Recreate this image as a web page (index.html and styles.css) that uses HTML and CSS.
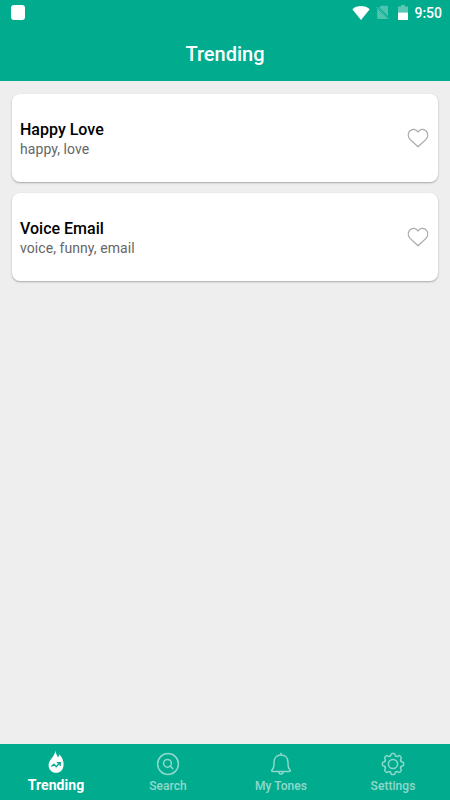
FILE: index.html
```html
<!DOCTYPE html>
<html lang="en">
<head>
<meta charset="utf-8">
<title>Trending</title>
<link rel="stylesheet" href="styles.css">
</head>
<body>
<header class="header">
  <div class="status">
    <span class="notice"></span>
    <div class="indicators">
      <svg class="wifi" width="18" height="14" viewBox="0 0 18 14"><path d="M.3 3.3C5 -1 13 -1 17.7 3.3L9 14Z" fill="#fff"/></svg>
      <svg class="sim" width="14" height="15" viewBox="0 0 14 15"><path d="M5 .8H11.2Q12 .8 12 1.6V11.3L3.2 2.4ZM1.2 3.4L11.6 14H2Q1.2 14 1.2 13.2Z" fill="#fff" opacity=".3"/><path d="M.6 1.8L12.8 14.2" stroke="#fff" stroke-width=".9" opacity=".35"/></svg>
      <svg class="battery" width="10" height="15" viewBox="0 0 10 15"><path d="M3 0h4v1.5h3V7.5H0V1.5h3z" fill="#fff" opacity=".35"/><path d="M0 7.5h10V15H0z" fill="#fff"/></svg>
      <span class="time">9:50</span>
    </div>
  </div>
  <h1 class="title">Trending</h1>
</header>
<main class="list">
  <article class="card">
    <div class="text">
      <h2 class="name">Happy Love</h2>
      <p class="tags">happy, love</p>
    </div>
    <svg class="heart" width="22" height="20" viewBox="0 0 22 20"><path d="M11 18.8L3.3 11.6C1 9.2 .6 5.6 2.7 3.1C5.1 .5 9.2 .9 11 4C12.8 .9 16.9 .5 19.3 3.1C21.4 5.6 21 9.2 18.7 11.6Z"/></svg>
  </article>
  <article class="card">
    <div class="text">
      <h2 class="name">Voice Email</h2>
      <p class="tags">voice, funny, email</p>
    </div>
    <svg class="heart" width="22" height="20" viewBox="0 0 22 20"><path d="M11 18.8L3.3 11.6C1 9.2 .6 5.6 2.7 3.1C5.1 .5 9.2 .9 11 4C12.8 .9 16.9 .5 19.3 3.1C21.4 5.6 21 9.2 18.7 11.6Z"/></svg>
  </article>
</main>
<nav class="tabs">
  <div class="tab active">
    <svg class="icon" width="24" height="24" viewBox="0 0 24 24"><path d="M11.3.8C11.8 3.6 13 5 13.8 7.2C14.8 6.5 15.3 5.4 15.3 4.2C18 7 19.6 10.5 19.6 14.2C19.6 19.3 16.6 22.8 12.1 22.8C7.6 22.8 4.6 19.5 4.6 15C4.6 9.8 10.8 7 11.3.8Z" fill="#fff"/><path d="M7.3 16.4L10 14.2L12.2 16.8L16 12.8M12.8 12.6H16.2V16" fill="none" stroke="#00ab8e" stroke-width="1.3"/></svg>
    <span class="label">Trending</span>
  </div>
  <div class="tab search">
    <svg class="icon line" width="24" height="24" viewBox="0 0 24 24"><circle cx="12" cy="12" r="10.4"/><circle cx="11.5" cy="11.3" r="3.9"/><path d="M14.3 14.1L16.8 16.7"/></svg>
    <span class="label">Search</span>
  </div>
  <div class="tab">
    <svg class="icon line" width="24" height="24" viewBox="0 0 24 24"><path d="M12 1.2V3M3.8 19.6C2.5 19.6 2.4 18.4 3.3 17.6C4.6 16.1 5 14.8 5 12.2V10.2C5 5.8 7.8 3 12 3S19 5.8 19 10.2V12.2C19 14.8 19.4 16.1 20.7 17.6C21.6 18.4 21.5 19.6 20.2 19.6ZM9.8 19.8C10 22.8 14 22.8 14.2 19.8"/></svg>
    <span class="label">My Tones</span>
  </div>
  <div class="tab settings">
    <svg class="icon line" width="24" height="24" viewBox="-12 -12 24 24">
      <defs><path id="tooth" d="M-3.25 -7.85C-2.6 -7.7 -2.2 -8.3 -2 -9.3Q-1.8 -10.6 -1 -10.6H1Q1.8 -10.6 2 -9.3C2.2 -8.3 2.6 -7.7 3.25 -7.85"/></defs>
      <use href="#tooth"/><use href="#tooth" transform="rotate(45)"/><use href="#tooth" transform="rotate(90)"/><use href="#tooth" transform="rotate(135)"/><use href="#tooth" transform="rotate(180)"/><use href="#tooth" transform="rotate(225)"/><use href="#tooth" transform="rotate(270)"/><use href="#tooth" transform="rotate(315)"/>
      <circle r="4.6"/>
    </svg>
    <span class="label">Settings</span>
  </div>
</nav>
</body>
</html>
```
FILE: styles.css
```css
* { box-sizing: border-box; }
body {
  margin: 0;
  height: 800px;
  display: flex;
  flex-direction: column;
  background: #eee;
  font-family: Roboto, sans-serif;
  overflow: hidden;
}
h1, h2, p { margin: 0; }
svg { display: block; }
.header { height: 81px; background: #00ab8e; color: #fff; }
.status {
  height: 26px;
  display: flex;
  justify-content: space-between;
  align-items: center;
  padding: 0 8px 0 11px;
}
.notice { width: 14px; height: 15px; margin-top: -1px; border-radius: 3px; background: #fff; }
.indicators { display: flex; align-items: center; }
.wifi { margin-right: 6px; }
.sim { margin-right: 8px; margin-top: -1px; }
.battery { margin-right: 6px; margin-top: -1px; }
.time { font-size: 14px; font-weight: 500; line-height: 26px; }
.title {
  font-size: 20px;
  font-weight: 500;
  line-height: 56px;
  text-align: center;
}
.list {
  flex: 1;
  display: flex;
  flex-direction: column;
  gap: 11px;
  padding: 13px 12px 0;
}
.card {
  height: 88px;
  display: flex;
  align-items: center;
  justify-content: space-between;
  padding: 0 9px 0 8px;
  background: #fff;
  border-radius: 8px;
  box-shadow: 0 1px 2px rgba(0, 0, 0, .3);
}
.text { padding-top: 1px; }
.name { font-size: 16px; font-weight: 500; line-height: 21px; color: #000; }
.tags { font-size: 14px; line-height: 19px; letter-spacing: .07px; color: #666; }
.heart { fill: none; stroke: #aaa; stroke-width: 1.3; stroke-linejoin: round; }
.tabs { height: 56px; display: flex; background: #00ab8e; color: #fff; }
.tab {
  flex: 1;
  display: flex;
  flex-direction: column;
  align-items: center;
  padding-top: 8px;
  opacity: .55;
}
.search, .settings { padding-right: 1px; }
.label { font-size: 12px; font-weight: 500; letter-spacing: .05px; line-height: 16px; margin-top: 2px; }
.active { opacity: 1; padding-top: 6px; }
.active .label { font-size: 14px; font-weight: 700; margin-top: 3px; }
.line { fill: none; stroke: #fff; stroke-width: 1.5; stroke-linecap: round; stroke-linejoin: round; }
```
